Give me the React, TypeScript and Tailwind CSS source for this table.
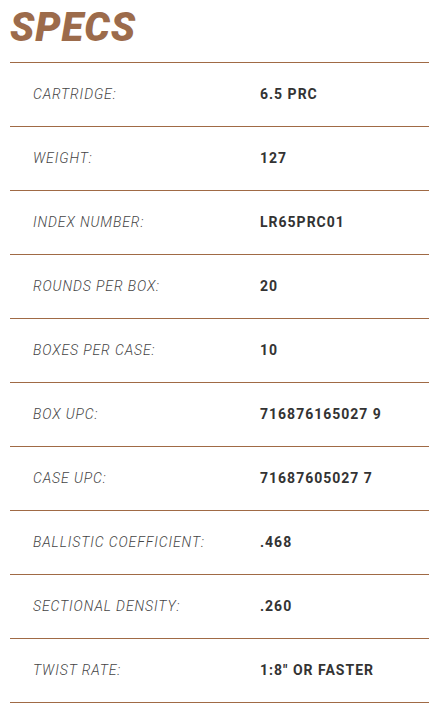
const specs = [
  { label: 'CARTRIDGE:', value: '6.5 PRC' },
  { label: 'WEIGHT:', value: '127' },
  { label: 'INDEX NUMBER:', value: 'LR65PRC01' },
  { label: 'ROUNDS PER BOX:', value: '20' },
  { label: 'BOXES PER CASE:', value: '10' },
  { label: 'BOX UPC:', value: '716876165027 9' },
  { label: 'CASE UPC:', value: '71687605027 7' },
  { label: 'BALLISTIC COEFFICIENT:', value: '.468' },
  { label: 'SECTIONAL DENSITY:', value: '.260' },
  { label: 'TWIST RATE:', value: '1:8" OR FASTER' },
];

export default function App() {
  return (
    <div className="min-h-screen bg-white pl-[10px] font-['Roboto',sans-serif]">
      <h1 className="h-[62px] pt-[4px] text-[40px] font-black italic leading-[48px] tracking-[1px] text-[#9c6b4b]">
        SPECS
      </h1>
      <div className="border-t border-[#a06a45]">
        {specs.map(s => (
          <div key={s.label} className="flex h-[64px] items-center border-b border-[#a06a45]">
            <div className="w-[250px] pl-[23px] text-[14px] font-light italic tracking-[0.9px] text-[#444]">
              {s.label}
            </div>
            <div className="text-[14px] font-bold tracking-[1px] text-[#333]">{s.value}</div>
          </div>
        ))}
      </div>
    </div>
  );
}
